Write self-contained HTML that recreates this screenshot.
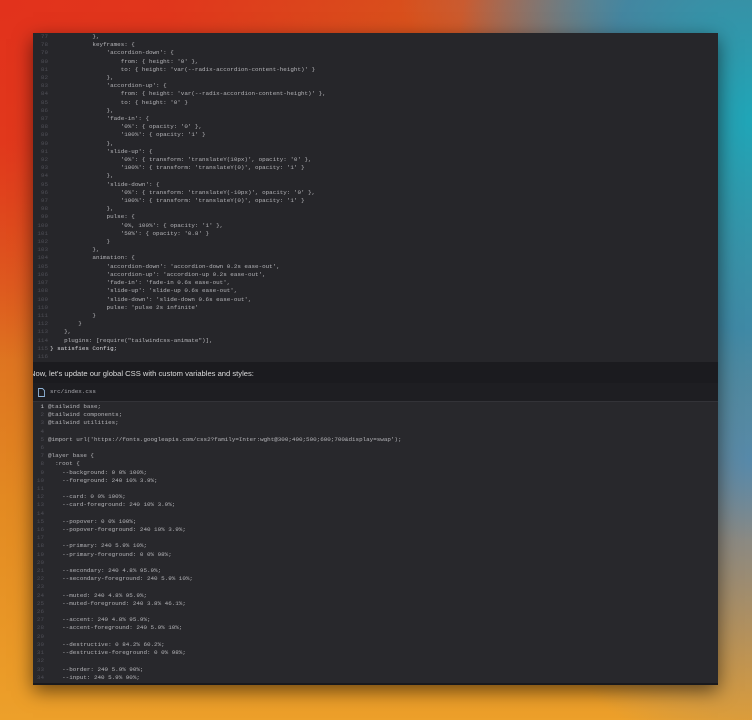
<!DOCTYPE html>
<html><head><meta charset="utf-8"><style>
html,body{margin:0;padding:0;width:752px;height:720px;overflow:hidden}
body{position:relative;background:#e07a22;
background:
radial-gradient(ellipse 420px 360px at 0px 0px,#e2321c 0%,rgba(226,50,28,.85) 40%,rgba(226,50,28,0) 100%),
radial-gradient(ellipse 300px 420px at 752px 120px,#1fa6b8 0%,rgba(40,140,180,.8) 50%,rgba(60,120,170,0) 100%),
radial-gradient(ellipse 260px 300px at 752px 460px,#6a88a6 0%,rgba(120,130,140,0) 100%),
radial-gradient(ellipse 200px 80px at 600px 0px,rgba(150,130,120,.7) 0%,rgba(150,130,120,0) 100%),
linear-gradient(180deg,#d8501c 0%,#dc6a20 40%,#e38a22 70%,#eda02a 100%);}
.win{position:absolute;left:33px;top:33px;width:685px;height:652px;background:#26262a;box-shadow:0 6px 18px rgba(0,0,0,.55);overflow:hidden}
pre{margin:0;position:absolute;font-family:"Liberation Mono",monospace;font-size:5.9px;line-height:8.2px;color:#b4b4b8;white-space:pre}
.ln{color:#4e4e56;text-align:right;width:14px}
.prose{position:absolute;left:0;top:329px;width:685px;height:21px;background:#1b1b1f;color:#dcdcdc;font-family:"Liberation Sans",sans-serif;font-size:7.6px;line-height:23px;text-indent:-3px;white-space:nowrap}
.hdr{position:absolute;left:0;top:350px;width:685px;height:18px;background:#1e1e22;border-bottom:1px solid #333338;color:#a8a8ae;font-family:"Liberation Mono",monospace;font-size:5.9px;line-height:18px}
.code2{position:absolute;left:0;top:369px;width:685px;height:283px;background:#28282c}
.bot{position:absolute;left:0;bottom:0;width:685px;height:2px;background:#1a1a1d}
</style></head><body>
<div class="win">
<pre class="ln" style="left:1px;top:0px">77
78
79
80
81
82
83
84
85
86
87
88
89
90
91
92
93
94
95
96
97
98
99
100
101
102
103
104
105
106
107
108
109
110
111
112
113
114
115
116</pre>
<pre style="left:17px;top:0px">            },
            keyframes: {
                'accordion-down': {
                    from: { height: '0' },
                    to: { height: 'var(--radix-accordion-content-height)' }
                },
                'accordion-up': {
                    from: { height: 'var(--radix-accordion-content-height)' },
                    to: { height: '0' }
                },
                'fade-in': {
                    '0%': { opacity: '0' },
                    '100%': { opacity: '1' }
                },
                'slide-up': {
                    '0%': { transform: 'translateY(10px)', opacity: '0' },
                    '100%': { transform: 'translateY(0)', opacity: '1' }
                },
                'slide-down': {
                    '0%': { transform: 'translateY(-10px)', opacity: '0' },
                    '100%': { transform: 'translateY(0)', opacity: '1' }
                },
                pulse: {
                    '0%, 100%': { opacity: '1' },
                    '50%': { opacity: '0.8' }
                }
            },
            animation: {
                'accordion-down': 'accordion-down 0.2s ease-out',
                'accordion-up': 'accordion-up 0.2s ease-out',
                'fade-in': 'fade-in 0.6s ease-out',
                'slide-up': 'slide-up 0.6s ease-out',
                'slide-down': 'slide-down 0.6s ease-out',
                pulse: 'pulse 2s infinite'
            }
        }
    },
    plugins: [require("tailwindcss-animate")],
<span style="color:#d8d8dc">} satisfies Config;</span>
</pre>
<div class="prose">Now, let's update our global CSS with custom variables and styles:</div>
<div class="hdr"><svg style="position:absolute;left:5px;top:5px" width="7" height="9" viewBox="0 0 7 9"><path d="M0.5 0.5h4l2 2v6h-6z" fill="none" stroke="#8fb4d8" stroke-width="0.9"/></svg><span style="position:absolute;left:17px">src/index.css</span></div>
<div class="code2">
<pre class="ln" style="left:0px;top:1px;width:11px"><span style="color:#c8c8cc">1</span>
2
3
4
5
6
7
8
9
10
11
12
13
14
15
16
17
18
19
20
21
22
23
24
25
26
27
28
29
30
31
32
33
34</pre>
<pre style="left:15px;top:1px">@tailwind base;
@tailwind components;
@tailwind utilities;

@import url('https://fonts.googleapis.com/css2?family=Inter:wght@300;400;500;600;700&amp;display=swap');

@layer base {
  :root {
    --background: 0 0% 100%;
    --foreground: 240 10% 3.9%;

    --card: 0 0% 100%;
    --card-foreground: 240 10% 3.9%;

    --popover: 0 0% 100%;
    --popover-foreground: 240 10% 3.9%;

    --primary: 240 5.9% 10%;
    --primary-foreground: 0 0% 98%;

    --secondary: 240 4.8% 95.9%;
    --secondary-foreground: 240 5.9% 10%;

    --muted: 240 4.8% 95.9%;
    --muted-foreground: 240 3.8% 46.1%;

    --accent: 240 4.8% 95.9%;
    --accent-foreground: 240 5.9% 10%;

    --destructive: 0 84.2% 60.2%;
    --destructive-foreground: 0 0% 98%;

    --border: 240 5.9% 90%;
    --input: 240 5.9% 90%;</pre>
</div>
<div class="bot"></div>
</div>
</body></html>
